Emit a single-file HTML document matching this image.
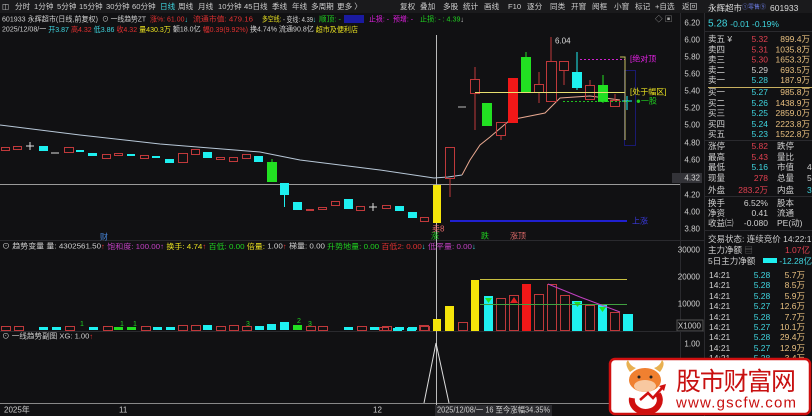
<!DOCTYPE html>
<html><head><meta charset="utf-8"><style>
html,body{margin:0;padding:0;background:#0f0f11;width:812px;height:416px;overflow:hidden}
svg{display:block;font-family:"Liberation Sans","Noto Sans CJK SC",sans-serif}
</style></head><body>
<svg width="812" height="416" viewBox="0 0 812 416" xmlns="http://www.w3.org/2000/svg">
<rect width="812" height="416" fill="#111113"/>
<!-- toolbar -->
<rect x="0" y="0" width="812" height="13" fill="#1a1a1c"/>
<g font-size="7.6" fill="#cfcfcf" dominant-baseline="central">
<text x="2" y="6.5">◫</text>
<text x="15" y="6.5">分时</text><text x="34" y="6.5">1分钟</text><text x="57" y="6.5">5分钟</text><text x="79" y="6.5">15分钟</text><text x="106" y="6.5">30分钟</text><text x="132" y="6.5">60分钟</text>
<text x="160" y="6.5" fill="#3fd6e0">日线</text><text x="178" y="6.5">周线</text><text x="198" y="6.5">月线</text><text x="218" y="6.5">10分钟</text><text x="244" y="6.5">45日线</text><text x="272" y="6.5">季线</text><text x="292" y="6.5">年线</text><text x="311" y="6.5">多周期</text><text x="337" y="6.5">更多 〉</text>
<text x="400" y="6.5">复权</text>
<text x="420" y="6.5">叠加</text><text x="443" y="6.5">多股</text><text x="463" y="6.5">统计</text><text x="484" y="6.5">画线</text><text x="508" y="6.5">F10</text><text x="527" y="6.5">逐分</text><text x="550" y="6.5">同类</text><text x="571" y="6.5">开窗</text><text x="592" y="6.5">阅框</text><text x="614" y="6.5">小窗</text><text x="635" y="6.5">标记</text><text x="655" y="6.5">+自选</text><text x="682" y="6.5">返回</text>
</g>
<!-- info line 1 -->
<g font-size="7.6" dominant-baseline="central">
<text x="2" y="19" fill="#d0d0d0" textLength="96" lengthAdjust="spacingAndGlyphs">601933 永辉超市(日线,前复权)</text>
<text x="102" y="19" fill="#d0d0d0" textLength="44" lengthAdjust="spacingAndGlyphs">⊙ 一线趋势ZT</text>
<text x="150" y="19" fill="#e03030" textLength="38" lengthAdjust="spacingAndGlyphs">涨%: 61.00<tspan fill="#3fd6e0">↓</tspan></text>
<text x="193" y="19" fill="#e03030" textLength="60" lengthAdjust="spacingAndGlyphs">流通市值: 479.16</text>
<text x="262" y="19" fill="#e8e020" textLength="54" lengthAdjust="spacingAndGlyphs">多空线: <tspan fill="#d0d0d0">- 变线: 4.39</tspan><tspan fill="#3fd6e0">↓</tspan></text>
<text x="319" y="19" fill="#20d020" textLength="22" lengthAdjust="spacingAndGlyphs">顺顶: -</text>
<rect x="344" y="15" width="20" height="8" fill="#1a1aa0"/>
<text x="369" y="19" fill="#e020e0" textLength="20" lengthAdjust="spacingAndGlyphs">止损: -</text>
<text x="393" y="19" fill="#e020e0" textLength="20" lengthAdjust="spacingAndGlyphs">预增: -</text>
<text x="420" y="19" fill="#20d020" textLength="44" lengthAdjust="spacingAndGlyphs">止损: - : 4.39<tspan fill="#d0d0d0">↓</tspan></text>
<text x="655" y="19" fill="#aaa">◇ ▣</text>
<text x="2" y="29" fill="#d0d0d0" textLength="356" lengthAdjust="spacingAndGlyphs">2025/12/08/一 <tspan fill="#3fd6e0">开3.87</tspan> <tspan fill="#e03030">高4.32</tspan> <tspan fill="#3fd6e0">低3.86</tspan> <tspan fill="#e03030">收4.32</tspan> <tspan fill="#e8e020">量430.3万</tspan> 额18.0亿 <tspan fill="#e03030">幅0.39(9.92%)</tspan> 换4.74% 流通90.8亿 <tspan fill="#e8e020">超市及便利店</tspan></text>
</g>
<!-- axis separator -->
<line x1="680.5" y1="13" x2="680.5" y2="405" stroke="#2a2a2e"/>
<line x1="704.5" y1="13" x2="704.5" y2="416" stroke="#2a2a2e"/>
<!-- price axis labels -->
<g font-size="8" fill="#cfcfcf" dominant-baseline="central" text-anchor="end">
<text x="700" y="23">6.20</text><text x="700" y="40">6.00</text><text x="700" y="57">5.80</text><text x="700" y="74">5.60</text><text x="700" y="91">5.40</text><text x="700" y="108">5.20</text><text x="700" y="125">5.00</text><text x="700" y="143">4.80</text><text x="700" y="160">4.60</text><text x="700" y="195">4.20</text><text x="700" y="212">4.00</text><text x="700" y="229">3.80</text>
<rect x="672" y="173" width="30" height="10" fill="#333338"/><text x="700" y="178">4.32</text>
<text x="700" y="250">30000</text><text x="700" y="277">20000</text><text x="700" y="304">10000</text>
<rect x="677" y="320" width="26" height="11" fill="#111113" stroke="#555"/><text x="701" y="326">X1000</text>
<text x="700" y="344">1.00</text>
</g>
<!-- separators -->
<line x1="0" y1="184.5" x2="680" y2="184.5" stroke="#9a9a9a"/>
<line x1="0" y1="240.5" x2="704" y2="240.5" stroke="#2a2a2e"/>
<line x1="0" y1="331.5" x2="704" y2="331.5" stroke="#2a2a2e"/>
<line x1="0" y1="403.5" x2="680" y2="403.5" stroke="#888"/>
<!-- crosshair -->
<line x1="436.5" y1="35" x2="436.5" y2="416" stroke="#bbb"/>
<!-- MA line -->
<polyline fill="none" stroke="#b8c8d8" stroke-width="1" points="0,125 80,135 160,144 260,152 300,160 380,170 434,178 448,177 462,175"/>
<polyline fill="none" stroke="#e8a890" stroke-width="1" points="462,175 470,160 480,145 490,137 510,120 545,113 560,98 590,96 620,100"/>
<!-- left candles -->
<g stroke-width="1">
<g stroke="#c0393b" fill="none">
<rect x="1.5" y="147.5" width="8" height="3"/><rect x="13.5" y="146.5" width="8" height="3"/><rect x="64.5" y="147.5" width="9" height="5"/><rect x="102.5" y="154.5" width="8" height="4"/><rect x="114.5" y="153.5" width="8" height="2"/><rect x="140.5" y="155.5" width="8" height="3"/><rect x="178.5" y="153.5" width="9" height="9"/><rect x="191.5" y="149.5" width="8" height="5"/><rect x="216.5" y="157.5" width="8" height="2"/><rect x="229.5" y="157.5" width="8" height="4"/><rect x="242.5" y="154.5" width="8" height="4"/><rect x="306.5" y="209.5" width="7" height="1"/><rect x="318.5" y="207.5" width="8" height="2"/><rect x="331.5" y="201.5" width="8" height="4"/><rect x="356.5" y="206.5" width="8" height="4"/><rect x="382.5" y="205.5" width="8" height="3"/><rect x="420.5" y="217.5" width="8" height="4"/>
</g>
<g stroke="#ddd"><line x1="26" y1="146" x2="34" y2="146"/><line x1="30" y1="142" x2="30" y2="150"/><line x1="51" y1="153" x2="59" y2="153"/><line x1="369" y1="207" x2="377" y2="207"/><line x1="373" y1="203" x2="373" y2="211"/></g>
<g fill="#1ef0f0">
<rect x="39" y="146" width="9" height="5"/><rect x="76" y="150" width="8" height="2"/><rect x="88" y="153" width="9" height="3"/><rect x="127" y="154" width="8" height="2"/><rect x="152" y="156" width="8" height="2"/><rect x="165" y="159" width="9" height="4"/><rect x="203" y="152" width="9" height="6"/><rect x="254" y="156" width="9" height="6"/><rect x="280" y="183" width="9" height="12"/><rect x="293" y="202" width="9" height="8"/><rect x="344" y="199" width="9" height="10"/><rect x="395" y="206" width="9" height="5"/><rect x="408" y="212" width="9" height="6"/>
</g>
<line x1="284.5" y1="195" x2="284.5" y2="207" stroke="#1ef0f0"/>
<rect x="267" y="162" width="10" height="20" fill="#22e022"/><line x1="272" y1="159" x2="272" y2="162" stroke="#22e022"/>
</g>
<!-- breakout yellow -->
<rect x="433" y="185" width="8" height="38" fill="#f5e50a"/>
<!-- right candles -->
<g stroke="#c0393b" fill="none">
<rect x="445.5" y="147.5" width="9" height="31"/><line x1="450" y1="178" x2="450" y2="197"/>
<rect x="470.5" y="79.5" width="9" height="14"/><line x1="475" y1="67" x2="475" y2="79"/><line x1="475" y1="94" x2="475" y2="130"/>
<rect x="496.5" y="122.5" width="9" height="13"/><line x1="501" y1="136" x2="501" y2="140"/>
<rect x="534.5" y="84.5" width="9" height="8"/><line x1="539" y1="72" x2="539" y2="84"/><line x1="539" y1="93" x2="539" y2="103"/>
<rect x="546.5" y="61.5" width="10" height="40"/><line x1="551" y1="37" x2="551" y2="61"/>
<rect x="559.5" y="61.5" width="9" height="9"/><line x1="564" y1="71" x2="564" y2="85"/>
<rect x="585.5" y="85.5" width="9" height="14"/><line x1="590" y1="80" x2="590" y2="85"/>
<rect x="610.5" y="100.5" width="9" height="6"/><line x1="615" y1="94" x2="615" y2="100"/>
</g>
<line x1="458" y1="107" x2="466" y2="107" stroke="#bbb"/>
<rect x="482" y="103" width="10" height="23" fill="#22e022"/>
<rect x="508" y="78" width="10" height="45" fill="#f01818"/>
<rect x="521" y="57" width="10" height="36" fill="#22e022"/><line x1="526" y1="52" x2="526" y2="57" stroke="#22e022"/>
<rect x="572" y="72" width="10" height="16" fill="#1ef0f0"/><line x1="577" y1="52" x2="577" y2="90" stroke="#1ef0f0"/>
<rect x="598" y="85" width="10" height="17" fill="#22e022"/><line x1="603" y1="75" x2="603" y2="103" stroke="#22e022"/>
<rect x="624.5" y="70.5" width="11" height="75" fill="none" stroke="#1a1a70"/>
<line x1="627" y1="96" x2="627" y2="110" stroke="#1ef0f0"/><line x1="622" y1="101" x2="632" y2="101" stroke="#1ef0f0"/>
<text x="555" y="41" font-size="8" fill="#ddd" dominant-baseline="central">6.04</text>
<line x1="475" y1="92.5" x2="625" y2="92.5" stroke="#e8e070"/>
<line x1="580" y1="59.5" x2="625" y2="59.5" stroke="#d020d0" stroke-dasharray="2,2"/>
<line x1="563" y1="101.5" x2="630" y2="101.5" stroke="#20c020" stroke-dasharray="2,2"/>
<polyline points="620,57 625,57 625,140" fill="none" stroke="#c8c060"/>
<g font-size="8" dominant-baseline="central">
<text x="630" y="59" fill="#e020e0">[绝对顶</text>
<text x="630" y="92" fill="#e8e020">[处于幅区]</text>
<text x="636" y="101" fill="#20d020">●一股</text>
<text x="632" y="221" fill="#3a3ae0">上涨</text>
</g>
<line x1="450" y1="221" x2="627" y2="221" stroke="#2020d0" stroke-width="2"/>
<g font-size="8" dominant-baseline="central">
<text x="100" y="237" fill="#4a8ae0">财</text>
<text x="431" y="236" fill="#20d020">涨</text>
<text x="481" y="236" fill="#20d020">跌</text>
<text x="510" y="236" fill="#e06a6a">涨顶</text>
<text x="432" y="229" fill="#e06a6a">卖8</text>
</g>
<!-- indicator header -->
<g font-size="7.6" dominant-baseline="central">
<text x="2" y="246" fill="#d0d0d0" textLength="474" lengthAdjust="spacingAndGlyphs">⊙ 趋势变量 量: 4302561.50<tspan fill="#e03030">↑</tspan> <tspan fill="#c040c0">饱和度: 100.00↑</tspan> <tspan fill="#e8e020">换手: 4.74<tspan fill="#e03030">↑</tspan></tspan> <tspan fill="#20d020">百低: 0.00</tspan> <tspan fill="#e8e020">倍量:</tspan> 1.00<tspan fill="#e03030">↑</tspan> 梯量: 0.00 <tspan fill="#20d020">升势地量: 0.00</tspan> <tspan fill="#e03030">百低2: 0.00</tspan><tspan fill="#3fd6e0">↓</tspan> <tspan fill="#c040c0">低平量: 0.00</tspan><tspan fill="#3fd6e0">↓</tspan></text>
</g>
<!-- volume bars left small -->
<g>
<g stroke="#c0393b" fill="none">
<rect x="1.5" y="326.5" width="9" height="4"/><rect x="14.5" y="326.5" width="9" height="4"/><rect x="65.5" y="326.5" width="9" height="4"/><rect x="103.5" y="326.5" width="9" height="4"/><rect x="141.5" y="326.5" width="9" height="4"/><rect x="178.5" y="325.5" width="9" height="5"/><rect x="191.5" y="325.5" width="9" height="5"/><rect x="216.5" y="326.5" width="9" height="4"/><rect x="229.5" y="325.5" width="9" height="5"/><rect x="242.5" y="326.5" width="9" height="4"/><rect x="306.5" y="326.5" width="9" height="4"/><rect x="318.5" y="326.5" width="9" height="4"/><rect x="357.5" y="326.5" width="9" height="4"/><rect x="382.5" y="326.5" width="9" height="4"/><rect x="420.5" y="326.5" width="9" height="4"/>
</g>
<g fill="#1ef0f0">
<rect x="39" y="327" width="9" height="3"/><rect x="52" y="327" width="9" height="3"/><rect x="89" y="327" width="9" height="3"/><rect x="153" y="327" width="9" height="3"/><rect x="166" y="327" width="9" height="3"/><rect x="203" y="325" width="9" height="5"/><rect x="255" y="326" width="9" height="4"/><rect x="267" y="324" width="9" height="6"/><rect x="280" y="322" width="9" height="8"/><rect x="344" y="327" width="9" height="3"/><rect x="370" y="327" width="9" height="3"/><rect x="395" y="327" width="9" height="3"/><rect x="408" y="327" width="9" height="3"/>
</g>
<g fill="#22e022"><rect x="114" y="327" width="9" height="3"/><rect x="127" y="327" width="9" height="3"/><rect x="293" y="325" width="9" height="5"/></g>
<g font-size="7" fill="#20d020"><text x="80" y="326">1</text><text x="120" y="326">1</text><text x="133" y="326">1</text><text x="246" y="326">3</text><text x="297" y="323">2</text><text x="308" y="326">3</text></g>
</g>
<!-- volume bars right -->
<g stroke="#c0393b" fill="none">
<rect x="379.5" y="327.5" width="9" height="3"/><rect x="419.5" y="325.5" width="9" height="5"/><rect x="458.5" y="322.5" width="9" height="8"/>
<rect x="496.5" y="298.5" width="9" height="32"/><rect x="509.5" y="295.5" width="9" height="35"/><rect x="534.5" y="294.5" width="9" height="36"/><rect x="547.5" y="284.5" width="9" height="46"/><rect x="560.5" y="295.5" width="9" height="35"/><rect x="585.5" y="305.5" width="9" height="25"/><rect x="610.5" y="312.5" width="9" height="18"/>
</g>
<g fill="#1ef0f0"><rect x="393" y="328" width="9" height="3"/><rect x="407" y="328" width="9" height="3"/><rect x="484" y="296" width="9" height="35"/><rect x="572" y="301" width="10" height="30"/><rect x="598" y="305" width="9" height="26"/><rect x="623" y="314" width="10" height="17"/></g>
<g fill="#f5e50a"><rect x="433" y="319" width="8" height="12"/><rect x="445" y="306" width="9" height="25"/><rect x="471" y="280" width="8" height="51"/></g>
<rect x="522" y="284" width="9" height="47" fill="#f01818"/>
<polygon points="510,303 514,297 518,303" fill="#e02020"/>
<g fill="#22e022"><polygon points="485,298 492,298 488.5,303"/><polygon points="574,302 581,302 577.5,307"/><polygon points="599,307 606,307 602.5,312"/></g>
<line x1="480" y1="279.5" x2="627" y2="279.5" stroke="#c8c040"/>
<line x1="480" y1="304.5" x2="627" y2="304.5" stroke="#40a040"/>
<polyline points="548,284 580,297 620,312" fill="none" stroke="#c040c0"/>
<!-- lower pane -->
<text x="2" y="336" font-size="7.6" fill="#d0d0d0" dominant-baseline="central">⊙ 一线趋势副图 XG: 1.00<tspan fill="#e03030">↑</tspan></text>
<polyline points="424,403 436,343 449,403" fill="none" stroke="#ddd"/>
<!-- bottom axis -->
<g font-size="8" fill="#cfcfcf" dominant-baseline="central">
<text x="4" y="410">2025年</text><text x="119" y="410">11</text><text x="373" y="410">12</text>
<rect x="435" y="405" width="117" height="11" fill="#2a2a2e"/>
<text x="437" y="410" textLength="113" lengthAdjust="spacingAndGlyphs">2025/12/08/一 16 至今涨幅34.35%</text>
</g>
<!-- right panel -->
<g font-size="8.5" dominant-baseline="central">
<text x="708" y="8" fill="#dcdcdc">永辉超市<tspan font-size="6" fill="#6a7ae0">①零售⑨</tspan><tspan x="770">601933</tspan></text>
<text x="708" y="24" fill="#3fd6e0" font-size="10">5.28 <tspan font-size="8.5">-0.01 -0.19%</tspan></text>
</g>
<line x1="704" y1="31.5" x2="812" y2="31.5" stroke="#2a2a2e"/>
<line x1="708" y1="87.5" x2="812" y2="87.5" stroke="#c8b060"/>
<line x1="704" y1="140.5" x2="812" y2="140.5" stroke="#2a2a2e"/>
<line x1="704" y1="196.5" x2="812" y2="196.5" stroke="#2a2a2e"/>
<line x1="704" y1="230.5" x2="812" y2="230.5" stroke="#2a2a2e"/>
<g font-size="8.5" dominant-baseline="central" fill="#d0d0d0">
<text x="708" y="39">卖五 ¥</text><text x="708" y="49.5">卖四</text><text x="708" y="59.5">卖三</text><text x="708" y="70">卖二</text><text x="708" y="80">卖一</text>
<text x="708" y="92">买一</text><text x="708" y="103">买二</text><text x="708" y="113">买三</text><text x="708" y="124">买四</text><text x="708" y="134">买五</text>
<text x="708" y="146">涨停</text><text x="708" y="157">最高</text><text x="708" y="167">最低</text><text x="708" y="178">现量</text><text x="708" y="190">外盘</text>
<text x="708" y="203">换手</text><text x="708" y="213">净资</text><text x="708" y="223">收益㈢</text>
<text x="777" y="146">跌停</text><text x="777" y="157">量比</text><text x="777" y="167">市值</text><text x="777" y="178">总量</text><text x="777" y="190">内盘</text>
<text x="777" y="203">股本</text><text x="777" y="213">流通</text><text x="777" y="223">PE(动)</text>
<g text-anchor="end">
<text x="768" y="39" fill="#e04050">5.32</text><text x="768" y="49.5" fill="#e04050">5.31</text><text x="768" y="59.5" fill="#e04050">5.30</text><text x="768" y="70">5.29</text><text x="768" y="80" fill="#3fd6e0">5.28</text>
<text x="768" y="92" fill="#3fd6e0">5.27</text><text x="768" y="103" fill="#3fd6e0">5.26</text><text x="768" y="113" fill="#3fd6e0">5.25</text><text x="768" y="124" fill="#3fd6e0">5.24</text><text x="768" y="134" fill="#3fd6e0">5.23</text>
<text x="768" y="146" fill="#e04050">5.82</text><text x="768" y="157" fill="#e04050">5.43</text><text x="768" y="167" fill="#3fd6e0">5.16</text><text x="768" y="178" fill="#e04050">278</text><text x="768" y="190" fill="#e04050">283.2万</text>
<text x="768" y="203">6.52%</text><text x="768" y="213">0.41</text><text x="768" y="223">-0.080</text>
<g fill="#e8c080">
<text x="810" y="39">899.4万</text><text x="810" y="49.5">1035.8万</text><text x="810" y="59.5">1653.3万</text><text x="810" y="70">693.5万</text><text x="810" y="80">187.9万</text>
<text x="810" y="92">985.8万</text><text x="810" y="103">1438.9万</text><text x="810" y="113">2859.0万</text><text x="810" y="124">2223.8万</text><text x="810" y="134">1522.8万</text>
</g>
</g>
<text x="807" y="167">4</text><text x="807" y="178">5</text><text x="807" y="190" fill="#3fd6e0">3</text>
<text x="708" y="239">交易状态: 连续竞价 14:22:17</text>
<text x="708" y="250">主力净额 <tspan fill="#666">▤</tspan></text>
<text x="810" y="250" fill="#e04050" text-anchor="end">1.07亿</text>
<text x="708" y="261">5日主力净额</text>
<rect x="763" y="258" width="14" height="5" fill="#1ef0f0"/>
<text x="812" y="261" fill="#3fd6e0" text-anchor="end">-12.28亿</text>
</g>
<g font-size="8.5" dominant-baseline="central" fill="#d0d0d0">
<text x="709" y="275">14:21</text><text x="709" y="285">14:21</text><text x="709" y="296">14:21</text><text x="709" y="306">14:21</text><text x="709" y="317">14:21</text><text x="709" y="327">14:21</text><text x="709" y="337">14:21</text><text x="709" y="348">14:21</text><text x="709" y="358">14:21</text>
<g fill="#3fd6e0" text-anchor="middle"><text x="762" y="275">5.28</text><text x="762" y="285">5.28</text><text x="762" y="296">5.28</text><text x="762" y="306">5.27</text><text x="762" y="317">5.28</text><text x="762" y="327">5.27</text><text x="762" y="337">5.28</text><text x="762" y="348">5.27</text><text x="762" y="358">5.28</text></g>
<g fill="#e8c080" text-anchor="end"><text x="805" y="275">5.7万</text><text x="805" y="285">8.5万</text><text x="805" y="296">5.9万</text><text x="805" y="306">12.6万</text><text x="805" y="317">7.7万</text><text x="805" y="327">10.1万</text><text x="805" y="337">29.4万</text><text x="805" y="348">12.9万</text><text x="805" y="358">3.4万</text></g>
</g>
<!-- watermark logo -->
<rect x="610" y="359" width="200" height="55" rx="5" fill="#fff" stroke="#d01010" stroke-width="2.5"/>
<g>
<path d="M630 372 q-6 -8 -2 -12 q2 6 8 8 z" fill="#e8b050"/>
<path d="M660 372 q6 -8 2 -12 q-2 6 -8 8 z" fill="#e8b050"/>
<ellipse cx="645" cy="380" rx="16" ry="12" fill="#f08030"/>
<ellipse cx="645" cy="386" rx="11" ry="6" fill="#f8c8a0"/>
<circle cx="639" cy="377" r="1.5" fill="#222"/><circle cx="651" cy="377" r="1.5" fill="#222"/>
<path d="M632 398 a14 12 0 1 0 26 -4" fill="none" stroke="#d01010" stroke-width="6"/>
<polyline points="640,400 648,393 653,398 662,388" fill="none" stroke="#d01010" stroke-width="2.5"/>
<polygon points="659,386 666,384 664,391" fill="#d01010"/>
</g>
<text x="676" y="380" font-size="25" fill="#c81010" dominant-baseline="central" font-family="Noto Sans CJK SC, sans-serif" textLength="120">股市财富网</text>
<text x="676" y="403" font-size="15" fill="#c81010" dominant-baseline="central" textLength="120">www.gscfw.com</text>
</svg>
</body></html>
